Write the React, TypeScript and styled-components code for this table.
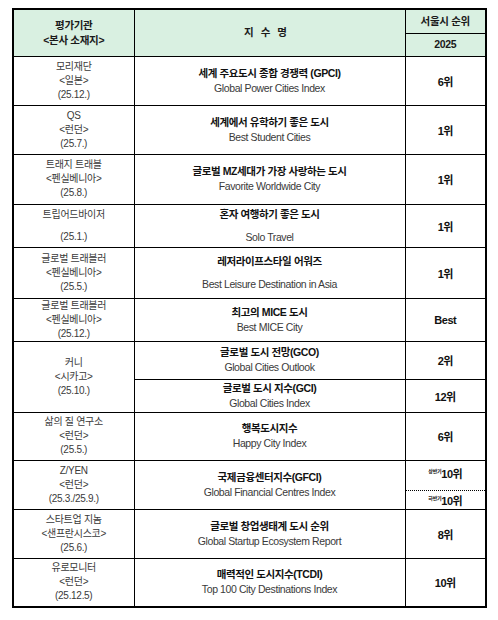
import React from 'react';
import styled, { createGlobalStyle } from 'styled-components';

type Item = {
  title: string;
  en: string;
  rank?: string;
  ranks?: { label: string; value: string }[];
  h: number;
};

type Entry = {
  org: string[];
  items: Item[];
  gap?: boolean;
};

const rows: Entry[] = [
  {
    org: ['모리재단', '<일본>', '(25.12.)'],
    items: [{ title: '세계 주요도시 종합 경쟁력 (GPCI)', en: 'Global Power Cities Index', rank: '6위', h: 49 }],
  },
  {
    org: ['QS', '<런던>', '(25.7.)'],
    items: [{ title: '세계에서 유학하기 좋은 도시', en: 'Best Student Cities', rank: '1위', h: 49 }],
  },
  {
    org: ['트래지 트래블', '<펜실베니아>', '(25.8.)'],
    items: [{ title: '글로벌 MZ세대가 가장 사랑하는 도시', en: 'Favorite Worldwide City', rank: '1위', h: 50 }],
  },
  {
    org: ['트립어드바이저', '', '(25.1.)'],
    gap: true,
    items: [{ title: '혼자 여행하기 좋은 도시', en: 'Solo Travel', rank: '1위', h: 43 }],
  },
  {
    org: ['글로벌 트래블러', '<펜실베니아>', '(25.5.)'],
    gap: true,
    items: [{ title: '레저라이프스타일 어워즈', en: 'Best Leisure Destination in Asia', rank: '1위', h: 51 }],
  },
  {
    org: ['글로벌 트래블러', '<펜실베니아>', '(25.12.)'],
    items: [{ title: '최고의 MICE 도시', en: 'Best MICE City', rank: 'Best', h: 43 }],
  },
  {
    org: ['커니', '<시카고>', '(25.10.)'],
    items: [
      { title: '글로벌 도시 전망(GCO)', en: 'Global Cities Outlook', rank: '2위', h: 38 },
      { title: '글로벌 도시 지수(GCI)', en: 'Global Cities Index', rank: '12위', h: 33 },
    ],
  },
  {
    org: ['삶의 질 연구소', '<런던>', '(25.5.)'],
    items: [{ title: '행복도시지수', en: 'Happy City Index', rank: '6위', h: 48 }],
  },
  {
    org: ['Z/YEN', '<런던>', '(25.3./25.9.)'],
    items: [
      {
        title: '국제금융센터지수(GFCI)',
        en: 'Global Financial Centres Index',
        ranks: [
          { label: '상반기', value: '10위' },
          { label: '하반기', value: '10위' },
        ],
        h: 49,
      },
    ],
  },
  {
    org: ['스타트업 지놈', '<샌프란시스코>', '(25.6.)'],
    items: [{ title: '글로벌 창업생태계 도시 순위', en: 'Global Startup Ecosystem Report', rank: '8위', h: 49 }],
  },
  {
    org: ['유로모니터', '<런던>', '(25.12.5)'],
    items: [{ title: '매력적인 도시지수(TCDI)', en: 'Top 100 City Destinations Index', rank: '10위', h: 49 }],
  },
];

const App = () => {
  return (
    <Page>
      <GlobalStyle />
      <Table>
        <colgroup>
          <col style={{ width: 121 }} />
          <col style={{ width: 271 }} />
          <col style={{ width: 81 }} />
        </colgroup>
        <thead>
          <Row $h={24}>
            <HeadCell rowSpan={2}>
              평가기관
              <br />
              &lt;본사 소재지&gt;
            </HeadCell>
            <HeadCell rowSpan={2} $spaced>
              지 수 명
            </HeadCell>
            <HeadCell>서울시 순위</HeadCell>
          </Row>
          <Row $h={23}>
            <HeadCell>2025</HeadCell>
          </Row>
        </thead>
        <tbody>
          {rows.map((entry, i) =>
            entry.items.map((item, j) => {
              const orgCell =
                j === 0 ? (
                  <OrgCell rowSpan={entry.items.length > 1 ? entry.items.length : item.ranks ? 2 : 1}>
                    {entry.org.map((line, k) =>
                      line ? <OrgLine key={k}>{line}</OrgLine> : <Spacer key={k} />
                    )}
                  </OrgCell>
                ) : null;
              const nameCell = (
                <NameCell rowSpan={item.ranks ? 2 : 1}>
                  <Title>{item.title}</Title>
                  <English $gap={!!entry.gap}>{item.en}</English>
                </NameCell>
              );
              if (item.ranks) {
                return (
                  <React.Fragment key={`${i}-${j}`}>
                    <Row $h={30}>
                      {orgCell}
                      {nameCell}
                      <RankCell $top>
                        <Half>{item.ranks[0].label}</Half>
                        {item.ranks[0].value}
                      </RankCell>
                    </Row>
                    <Row $h={19}>
                      <RankCell $dotted>
                        <Half>{item.ranks[1].label}</Half>
                        {item.ranks[1].value}
                      </RankCell>
                    </Row>
                  </React.Fragment>
                );
              }
              return (
                <Row key={`${i}-${j}`} $h={item.h}>
                  {orgCell}
                  {nameCell}
                  <RankCell>{item.rank}</RankCell>
                </Row>
              );
            })
          )}
        </tbody>
      </Table>
    </Page>
  );
};

export default App;

const GlobalStyle = createGlobalStyle`
  body {
    margin: 0;
    background: #ffffff;
    font-family: "Liberation Sans", "Noto Sans CJK KR", sans-serif;
  }
`;

const Page = styled.div`
  padding: 8px 0 0 12px;
`;

const Table = styled.table`
  border-collapse: collapse;
  table-layout: fixed;
  width: 473px;
  border: 2px solid #000;
`;

const Row = styled.tr<{ $h: number }>`
  height: ${(props) => props.$h}px;
`;

const Cell = styled.td`
  border: 1px solid #000;
  padding: 0;
  text-align: center;
  vertical-align: middle;
`;

const HeadCell = styled(Cell)<{ $spaced?: boolean }>`
  background: #d9f0e1;
  font-size: 10.5px;
  font-weight: 700;
  line-height: 15px;
  color: #1a1a1a;
  letter-spacing: ${(props) => (props.$spaced ? '2px' : '-0.3px')};
  padding-right: ${(props) => (props.$spaced ? '6px' : '0')};
`;

const OrgCell = styled(Cell)`
  font-size: 10px;
  color: #3a3a3a;
  letter-spacing: -0.3px;
`;

const OrgLine = styled.div`
  line-height: 14px;
`;

const Spacer = styled.div`
  height: 8px;
`;

const NameCell = styled(Cell)``;

const Title = styled.div`
  font-size: 10.5px;
  font-weight: 700;
  line-height: 14px;
  color: #111;
  letter-spacing: -0.4px;
`;

const English = styled.div<{ $gap: boolean }>`
  font-size: 10.5px;
  line-height: 15px;
  color: #3a3a3a;
  letter-spacing: -0.4px;
  margin-top: ${(props) => (props.$gap ? '9px' : '1px')};
`;

const RankCell = styled(Cell)<{ $dotted?: boolean; $top?: boolean }>`
  font-size: 11px;
  font-weight: 700;
  color: #111;
  letter-spacing: -0.5px;
  border-top: ${(props) => (props.$dotted ? '1px dotted #000' : undefined)};
  border-bottom: ${(props) => (props.$top ? '1px dotted #000' : undefined)};
  padding-bottom: ${(props) => (props.$top ? '4px' : '0')};
`;

const Half = styled.span`
  font-size: 5px;
  vertical-align: 5px;
  letter-spacing: -0.3px;
`;
